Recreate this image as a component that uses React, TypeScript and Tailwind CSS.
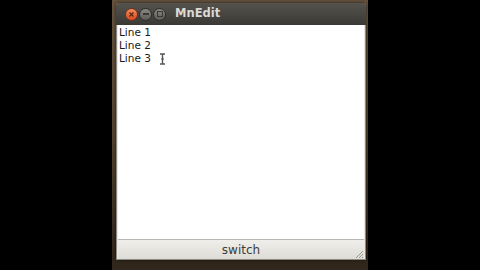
import React from "react";

function TitleButton({ kind }: { kind: "close" | "min" | "max" }) {
  if (kind === "close") {
    return (
      <div className="w-[13px] h-[13px] rounded-full bg-gradient-to-b from-[#f58a5a] to-[#d9471c] border border-[#6e3420] flex items-center justify-center">
        <svg width="7" height="7" viewBox="0 0 7 7">
          <path d="M1.5 1.5 L5.5 5.5 M5.5 1.5 L1.5 5.5" stroke="#5a2a14" strokeWidth="1.3" />
        </svg>
      </div>
    );
  }
  return (
    <div className="w-[13px] h-[13px] rounded-full bg-gradient-to-b from-[#8a8883] to-[#5c5b57] border border-[#2e2d2a] flex items-center justify-center">
      {kind === "min" ? (
        <div className="w-[6px] h-[1.5px] bg-[#3a3935]" />
      ) : (
        <div className="w-[6px] h-[6px] border border-[#3a3935]" />
      )}
    </div>
  );
}

export default function App() {
  return (
    <div className="w-[480px] h-[270px] flex bg-black overflow-hidden" style={{ fontFamily: "'DejaVu Sans', 'Noto Sans', sans-serif" }}>
      <div className="w-[112px] shrink-0" />

      {/* desktop frame */}
      <div className="w-[256px] shrink-0 bg-gradient-to-b from-[#66543f] via-[#56452f] to-[#30261b] pt-[3px] pl-[4px] pr-[2px] pb-[10px] flex flex-col">
        <div className="flex-1 flex flex-col shadow-[0_0_4px_rgba(0,0,0,0.6)]">
          {/* title bar */}
          <div className="h-[22px] rounded-t-[5px] bg-gradient-to-b from-[#54534e] to-[#3a3935] flex items-center pl-[9px]">
            <div className="flex items-center gap-[1px]">
              <TitleButton kind="close" />
              <TitleButton kind="min" />
              <TitleButton kind="max" />
            </div>
            <span className="ml-[9px] text-[11.5px] font-bold text-[#dcdad5] leading-none">MnEdit</span>
          </div>

          {/* body */}
          <div className="flex-1 flex flex-col bg-[#e7e6e1] border-x border-b border-[#8c8a85] px-[1px]">
            <div className="relative flex-1 bg-white text-[10.5px] leading-[13px] text-[#1a1a1a] pt-[1px] pl-[1px]">
              <div>Line 1</div>
              <div>Line 2</div>
              <div>Line 3</div>
              {/* text cursor */}
              <svg className="absolute left-[41px] top-[28px]" width="7" height="12" viewBox="0 0 7 12">
                <path d="M1 1 H6 M3.5 1 V11 M1 11 H6" stroke="#555" strokeWidth="1.4" fill="none" />
                <path d="M2 6 H5" stroke="#555" strokeWidth="1" />
              </svg>
            </div>
            <div className="relative h-[20px] border-t border-[#b8b6b0] bg-gradient-to-b from-[#efeeea] to-[#dedcd6] flex items-center justify-center text-[12px] text-[#3c3c3c]">
              switch
              <svg className="absolute right-0 bottom-0" width="10" height="10" viewBox="0 0 10 10">
                <path d="M9 2 L2 9 M9 5 L5 9 M9 8 L8 9" stroke="#9a9893" strokeWidth="1" />
              </svg>
            </div>
          </div>
        </div>
      </div>

      <div className="flex-1" />
    </div>
  );
}
